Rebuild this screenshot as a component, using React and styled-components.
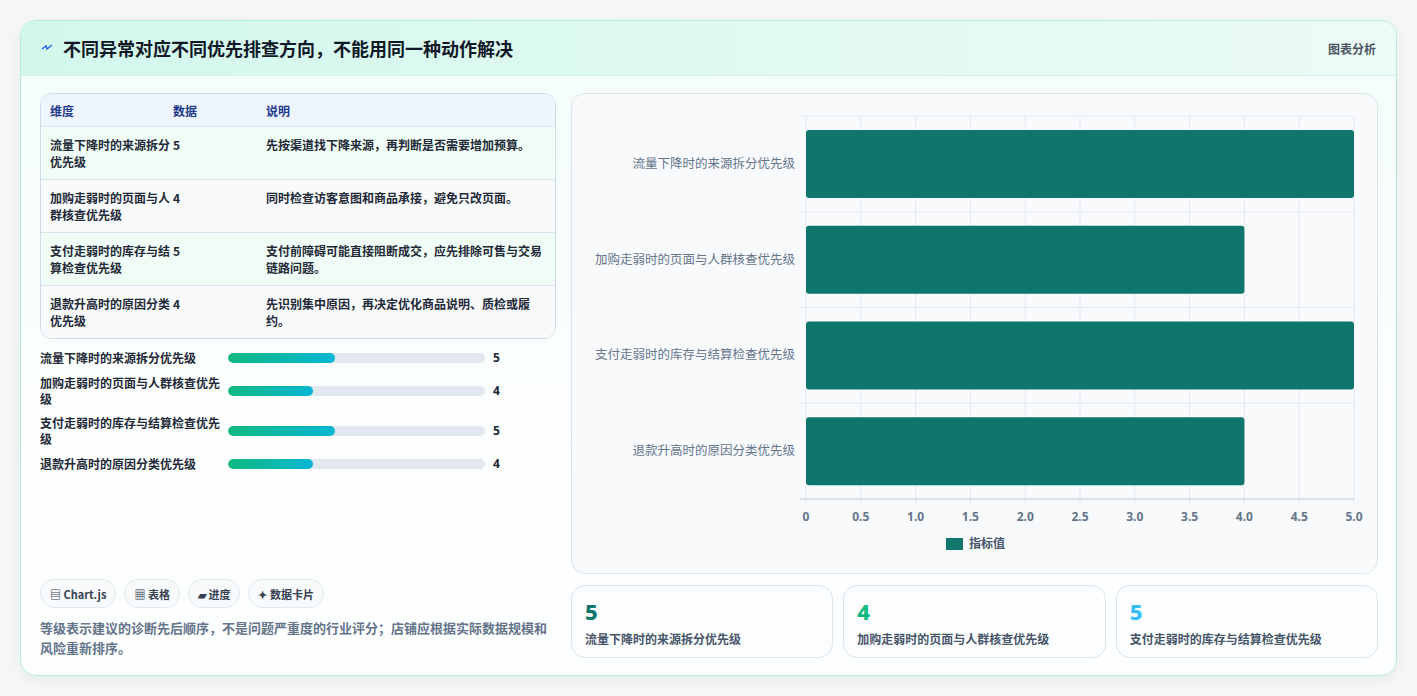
import React from "react";
import styled, { createGlobalStyle } from "styled-components";

const G = createGlobalStyle`
  body{margin:0;background:#f3f4f6;font-family:"Noto Sans CJK SC","Noto Sans",sans-serif;}
`;
const Page = styled.div`padding:20px 20px 20px 20px;background:#f5f6f7;height:696px;box-sizing:border-box;`;
const Card = styled.div`
  width:1377px;height:656px;box-sizing:border-box;border:1px solid #b5ece0;border-radius:16px;
  background:linear-gradient(180deg,#f2fdf9,#fdfefe 70%);overflow:hidden;display:flex;flex-direction:column;
  box-shadow:0 4px 14px rgba(0,0,0,.05);
`;
const Header = styled.div`
  height:54px;flex:none;display:flex;align-items:center;justify-content:space-between;padding:0 20px;
  background:linear-gradient(90deg,#d2f8ec,#ecfbf6);border-bottom:1px solid #d5f2ea;
`;
const Title = styled.h1`margin:0;font-size:18px;font-weight:700;color:#111827;display:flex;align-items:center;gap:10px;`;
const Tag = styled.span`font-size:12px;color:#4b5563;font-weight:600;`;
const Body = styled.div`flex:1;display:grid;grid-template-columns:516px 807px;gap:15px;padding:17px 19px 18px 19px;`;
const Left = styled.div`display:flex;flex-direction:column;`;
const Table = styled.div`border:1px solid #cfdbe8;border-radius:12px;overflow:hidden;`;
const Row = styled.div`
  display:grid;grid-template-columns:123px 93px 1fr;padding:0 9px;font-size:12px;line-height:17px;
  background:${p=>p.$h?"#eef5fe":p.$alt?"#f0fdf6":"#f8fafc"};
  color:${p=>p.$h?"#1e3a8a":"#1f2937"};
  ${p=>p.$h?"height:32px;align-items:center;":"padding-top:9px;height:53px;box-sizing:border-box;"}
  border-top:${p=>p.$h?"none":"1px solid #dbe4ee"};font-weight:${p=>p.$h?700:600};
`;
const Bars = styled.div`display:flex;flex-direction:column;gap:8px;margin-top:10px;`;
const BarRow = styled.div`display:grid;grid-template-columns:188px 257px 30px;column-gap:0;align-items:center;font-size:12px;font-weight:600;color:#1f2937;line-height:16px;min-height:18px;`;
const Track = styled.div`height:10px;border-radius:5px;background:#e2e8f0;overflow:hidden;`;
const Fill = styled.div`height:100%;border-radius:5px;background:linear-gradient(90deg,#10b981,#06b6d4);`;
const Val = styled.span`padding-left:8px;font-weight:700;color:#1f2937;font-family:"Noto Sans",sans-serif;`;
const Chips = styled.div`display:flex;gap:8px;margin-top:auto;`;
const Chip = styled.span`font-size:11px;font-weight:700;color:#374151;border:1px solid #e2e8f0;border-radius:14px;padding:0 9px;height:27px;display:flex;align-items:center;background:#f8fafc;`;
const Note = styled.p`margin:10px 0 0;font-size:13px;line-height:20px;color:#64748b;font-weight:600;`;
const Right = styled.div`display:flex;flex-direction:column;gap:11px;`;
const ChartBox = styled.div`height:479px;border:1px solid #dbe4ee;border-radius:14px;background:#f8fafc;overflow:hidden;`;
const Stats = styled.div`display:grid;grid-template-columns:repeat(3,1fr);gap:10px;`;
const Stat = styled.div`height:73px;box-sizing:border-box;border:1px solid #dbe4ee;border-radius:14px;background:#fbfdfe;padding:12px 13px;`;
const Num = styled.div`font-size:22px;font-weight:800;line-height:26px;color:${p=>p.$c};font-family:"Noto Sans",sans-serif;`;
const Lab = styled.div`font-size:12px;color:#475569;font-weight:600;margin-top:6px;`;

const rows=[
  ["流量下降时的来源拆分优先级",5,"先按渠道找下降来源，再判断是否需要增加预算。"],
  ["加购走弱时的页面与人群核查优先级",4,"同时检查访客意图和商品承接，避免只改页面。"],
  ["支付走弱时的库存与结算检查优先级",5,"支付前障碍可能直接阻断成交，应先排除可售与交易链路问题。"],
  ["退款升高时的原因分类优先级",4,"先识别集中原因，再决定优化商品说明、质检或履约。"],
];

function Chart(){
  const x0=234,x1=782,yTop=22,yBot=405;
  const sx=v=>x0+(x1-x0)*v/5;
  const ticks=[0,0.5,1,1.5,2,2.5,3,3.5,4,4.5,5];
  const band=(yBot-yTop)/4;
  return (
    <svg width="807" height="479" style={{display:"block"}}>
      {ticks.map(t=><line key={t} x1={sx(t)} x2={sx(t)} y1={yTop} y2={yBot+6} stroke="#e5e9f0"/>)}
      {[0,1,2,3,4].map(i=><line key={i} x1={x0-6} x2={x1} y1={yTop+band*i} y2={yTop+band*i} stroke="#e5e9f0"/>)}
      <line x1={x0-6} x2={x1} y1={yBot} y2={yBot} stroke="#cbd2dc"/>
      {rows.map((r,i)=>{const cy=yTop+band*i+band/2;return(
        <g key={i}>
          <rect x={x0} y={cy-34} width={sx(r[1])-x0} height={68} rx="3" fill="#0f766e"/>
          <text x={223} y={cy+4} textAnchor="end" fontSize="12.5" fill="#64748b" fontFamily="Noto Sans CJK SC">{r[0]}</text>
        </g>);})}
      {ticks.map(t=><text key={t} x={sx(t)} y={427} textAnchor="middle" fontSize="12" fontWeight="700" fill="#64748b" fontFamily="Noto Sans">{t===0?"0":t.toFixed(1)}</text>)}
      <rect x={374} y={444} width={17} height={12} fill="#0f766e"/>
      <text x={397} y={454} fontSize="12" fill="#475569" fontFamily="Noto Sans CJK SC" fontWeight="600">指标值</text>
    </svg>
  );
}

export default function App(){
  return (<Page><G/>
    <Card>
      <Header>
        <Title><svg width="12" height="10" viewBox="0 0 12 10"><path d="M1 6 L5 3 L6 6 L11 2" stroke="#2563eb" strokeWidth="1.4" fill="none"/></svg>不同异常对应不同优先排查方向，不能用同一种动作解决</Title>
        <Tag>图表分析</Tag>
      </Header>
      <Body>
        <Left>
          <Table>
            <Row $h><span>维度</span><span>数据</span><span>说明</span></Row>
            {rows.map((r,i)=><Row key={i} $alt={i%2===0}><span>{r[0]}</span><span>{r[1]}</span><span>{r[2]}</span></Row>)}
          </Table>
          <Bars>
            {rows.map((r,i)=><BarRow key={i}><span>{r[0]}</span><Track><Fill style={{width:`${r[1]*8.3}%`}}/></Track><Val>{r[1]}</Val></BarRow>)}
          </Bars>
          <Chips><Chip>▤ Chart.js</Chip><Chip>▦ 表格</Chip><Chip>▰ 进度</Chip><Chip>✦ 数据卡片</Chip></Chips>
          <Note>等级表示建议的诊断先后顺序，不是问题严重度的行业评分；店铺应根据实际数据规模和风险重新排序。</Note>
        </Left>
        <Right>
          <ChartBox><Chart/></ChartBox>
          <Stats>
            <Stat><Num $c="#0f766e">5</Num><Lab>流量下降时的来源拆分优先级</Lab></Stat>
            <Stat><Num $c="#10b981">4</Num><Lab>加购走弱时的页面与人群核查优先级</Lab></Stat>
            <Stat><Num $c="#38bdf8">5</Num><Lab>支付走弱时的库存与结算检查优先级</Lab></Stat>
          </Stats>
        </Right>
      </Body>
    </Card>
  </Page>);
}
